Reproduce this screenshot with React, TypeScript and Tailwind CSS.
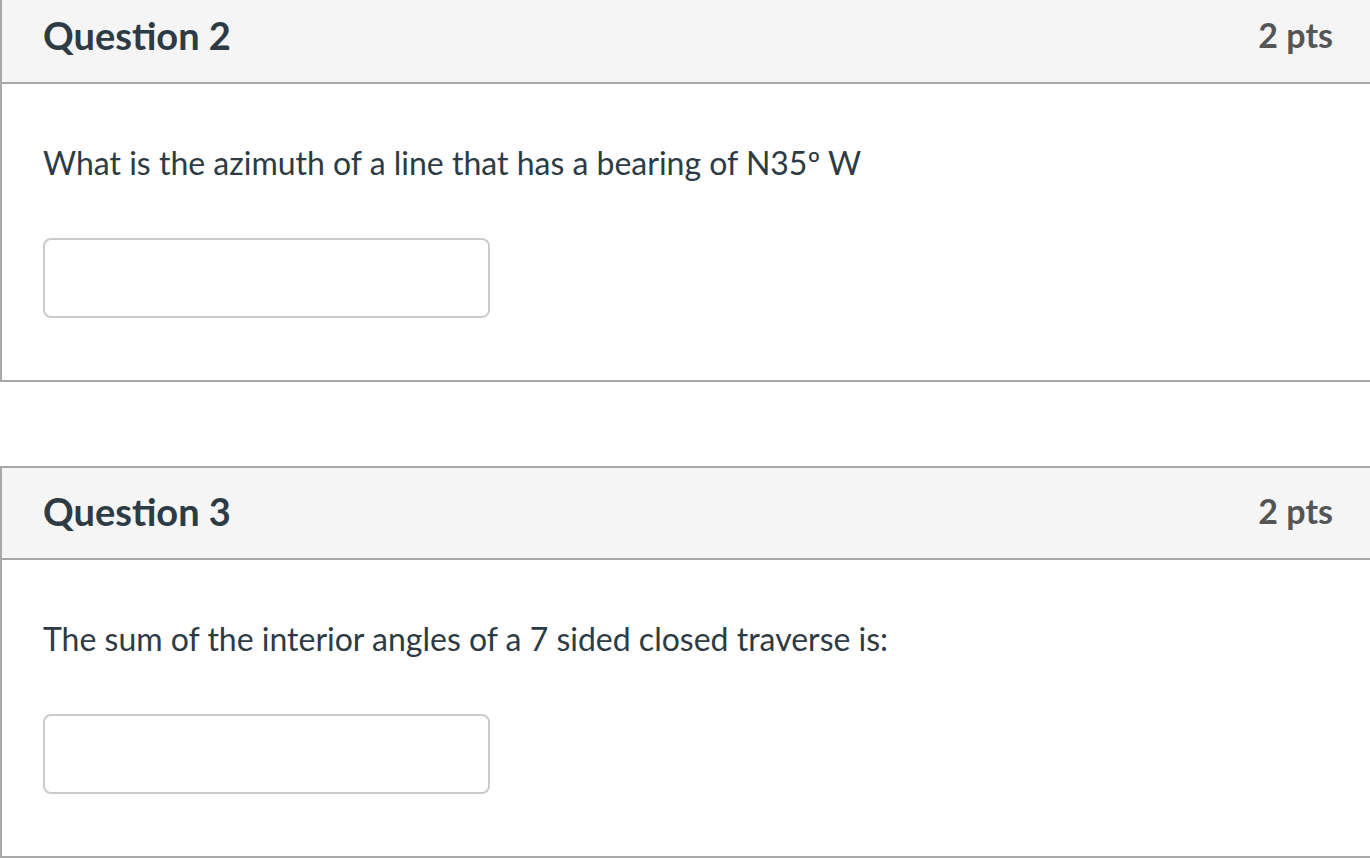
export default function App() {
  const questions = [
    {
      title: "Question 2",
      points: "2 pts",
      text: <>What is the azimuth of a line that has a bearing of N35º W</>,
    },
    {
      title: "Question 3",
      points: "2 pts",
      text: <>The sum of the interior angles of a 7 sided closed traverse is:</>,
    },
  ];

  return (
    <div className="w-[1370px] h-[858px] overflow-hidden bg-white font-['Lato','Liberation_Sans',sans-serif]">
      <div className="-mt-[10px] flex flex-col gap-[84px]">
        {questions.map((q) => (
          <div key={q.title} className="w-[1374px] border-2 border-[#a8a8a8] bg-white">
            <div className="h-[92px] bg-[#f5f5f5] border-b-2 border-[#a8a8a8] pl-[41px] pr-[39px] pb-[4px] flex items-center justify-between">
              <h2 className="text-[38px] font-bold text-[#2d3b45] leading-none">{q.title}</h2>
              <span className="text-[34px] font-bold text-[#555] leading-none">{q.points}</span>
            </div>
            <div className="px-[41px] pt-[55px] pb-[62px]">
              <p className="text-[32px] leading-[48px] text-[#2d3b45]">{q.text}</p>
              <input
                type="text"
                className="mt-[51px] block w-[447px] h-[80px] rounded-[8px] border-2 border-[#cbcbcb] bg-white"
              />
            </div>
          </div>
        ))}
      </div>
    </div>
  );
}
